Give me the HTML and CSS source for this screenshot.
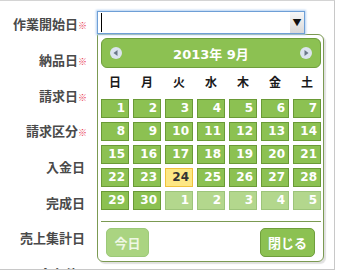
FILE: index.html
```html
<!DOCTYPE html>
<html lang="ja">
<head>
  <meta charset="UTF-8">
  <title>日付入力</title>
  <link rel="stylesheet" href="styles.css">
</head>
<body>

  <div class="frame">

    <!-- FORM -->
    <div class="form">
      <div class="row">
        <label class="lbl">作業開始日<span class="req">※</span></label>
        <div class="field">
          <div class="date-input">
            <span class="caret"></span>
            <span class="drop">▼</span>
          </div>
        </div>
      </div>
      <div class="row"><label class="lbl">納品日<span class="req">※</span></label></div>
      <div class="row"><label class="lbl">請求日<span class="req">※</span></label></div>
      <div class="row"><label class="lbl">請求区分<span class="req">※</span></label></div>
      <div class="row"><label class="lbl plain">入金日</label></div>
      <div class="row"><label class="lbl plain">完成日</label></div>
      <div class="row"><label class="lbl plain">売上集計日</label></div>
      <div class="row"><label class="lbl">入金条件<span class="req">※</span></label></div>
    </div>

    <!-- DATE PICKER -->
    <div class="picker">
      <div class="cal-head">
        <svg class="nav" width="12" height="12" viewBox="0 0 12 12"><circle cx="6" cy="6" r="6" fill="#dbe4ee"/><polygon points="7.5,3 3.5,6 7.5,9" fill="#6a7888"/></svg>
        <span class="title">2013年 9月</span>
        <svg class="nav" width="12" height="12" viewBox="0 0 12 12"><circle cx="6" cy="6" r="6" fill="#dbe4ee"/><polygon points="4.5,3 8.5,6 4.5,9" fill="#6a7888"/></svg>
      </div>

      <div class="week">
        <span>日</span><span>月</span><span>火</span><span>水</span><span>木</span><span>金</span><span>土</span>
      </div>

      <div class="days">
        <span class="d">1</span><span class="d">2</span><span class="d">3</span><span class="d">4</span><span class="d">5</span><span class="d">6</span><span class="d">7</span>
        <span class="d">8</span><span class="d">9</span><span class="d">10</span><span class="d">11</span><span class="d">12</span><span class="d">13</span><span class="d">14</span>
        <span class="d">15</span><span class="d">16</span><span class="d">17</span><span class="d">18</span><span class="d">19</span><span class="d">20</span><span class="d">21</span>
        <span class="d">22</span><span class="d">23</span><span class="d today">24</span><span class="d">25</span><span class="d">26</span><span class="d">27</span><span class="d">28</span>
        <span class="d">29</span><span class="d">30</span><span class="d other">1</span><span class="d other">2</span><span class="d other">3</span><span class="d other">4</span><span class="d other">5</span>
      </div>

      <div class="cal-foot">
        <button class="btn off">今日</button>
        <button class="btn">閉じる</button>
      </div>
    </div>

  </div>

</body>
</html>
```

FILE: styles.css
```css
body {
  margin: 0;
  background: #fff;
  font-family: "Noto Sans CJK JP", sans-serif;
}

.frame {
  position: relative;
  width: 334px;
  height: 268px;
  border-top: 1px solid #d4d4d4;
  border-right: 1px solid #c8c8c8;
  border-bottom: 1px solid #c8c8c8;
  overflow: hidden;
  background: #fff;
}

/* Form rows */
.form {
  padding-top: 5px;
}

.row {
  display: flex;
  align-items: center;
  height: 35.7px;
}

.lbl {
  width: 87px;
  flex: none;
  text-align: right;
  font-weight: bold;
  font-size: 13px;
  color: #4a4a4a;
}

.lbl.plain {
  padding-right: 2px;
  width: 85px;
}

.req {
  color: #e8334a;
  font-size: 9px;
}

.field {
  margin-left: 10px;
  margin-bottom: 2px;
}

.date-input {
  position: relative;
  z-index: 2;
  display: flex;
  align-items: stretch;
  width: 206px;
  height: 21px;
  border: 1px solid #6e9fd6;
  box-shadow: 0 0 2px 1px #b3d0f2;
  background: #fff;
}

.caret {
  width: 1px;
  margin: 1px 0 1px 3px;
  background: #000;
}

.drop {
  margin-left: auto;
  width: 14px;
  background: linear-gradient(#f7f7f7, #d9d9d9);
  font-size: 9px;
  line-height: 21px;
  text-align: center;
  color: #111;
}

/* Date picker */
.picker {
  position: absolute;
  left: 97px;
  top: 33px;
  z-index: 1;
  width: 220px;
  padding: 3px 2px 0 3px;
  border: 1px solid #7b9a52;
  border-radius: 0 6px 6px 6px;
  background: #fff;
  box-shadow: 2px 2px 1px rgba(0, 0, 0, 0.12);
}

.cal-head {
  display: flex;
  align-items: center;
  justify-content: space-between;
  height: 28px;
  padding: 0 8px 0 8px;
  border: 1px solid #6f9e3c;
  border-radius: 6px;
  background: #8cc152;
}

.cal-head .title {
  color: #fff;
  font-family: "DejaVu Sans", "Noto Sans CJK JP", sans-serif;
  font-weight: bold;
  font-size: 13px;
}

.week {
  display: grid;
  grid-template-columns: repeat(7, 1fr);
  column-gap: 4px;
  height: 28px;
  line-height: 28px;
  text-align: center;
  font-weight: bold;
  font-size: 12px;
  color: #1a1a1a;
}

.days {
  display: grid;
  grid-template-columns: repeat(7, 1fr);
  grid-auto-rows: 19px;
  gap: 4px;
  margin-top: 3px;
}

.d {
  border: 1px solid #6a9a36;
  background: #8cc152;
  color: #fff;
  font-family: "DejaVu Sans", sans-serif;
  font-weight: bold;
  font-size: 12px;
  line-height: 17px;
  text-align: right;
  padding-right: 3px;
}

.d.today {
  border-color: #efc23c;
  background: #fde784;
  color: #333;
}

.d.other {
  border-color: #9dc47a;
  background: #b3d78d;
}

.cal-foot {
  display: flex;
  justify-content: space-between;
  margin-top: 11px;
  padding: 6px 6px 4px 5px;
  border-top: 1px solid #7b9a52;
}

.btn {
  height: 29px;
  width: 55px;
  padding: 0;
  border: 1px solid #6f9e3c;
  border-radius: 5px;
  background: #8cc152;
  color: #fff;
  font-family: "Noto Sans CJK JP", sans-serif;
  font-weight: bold;
  font-size: 13px;
}

.btn.off {
  width: 43px;
  border-color: #9cc979;
  background: #aad481;
  color: #eef7e4;
}
```
